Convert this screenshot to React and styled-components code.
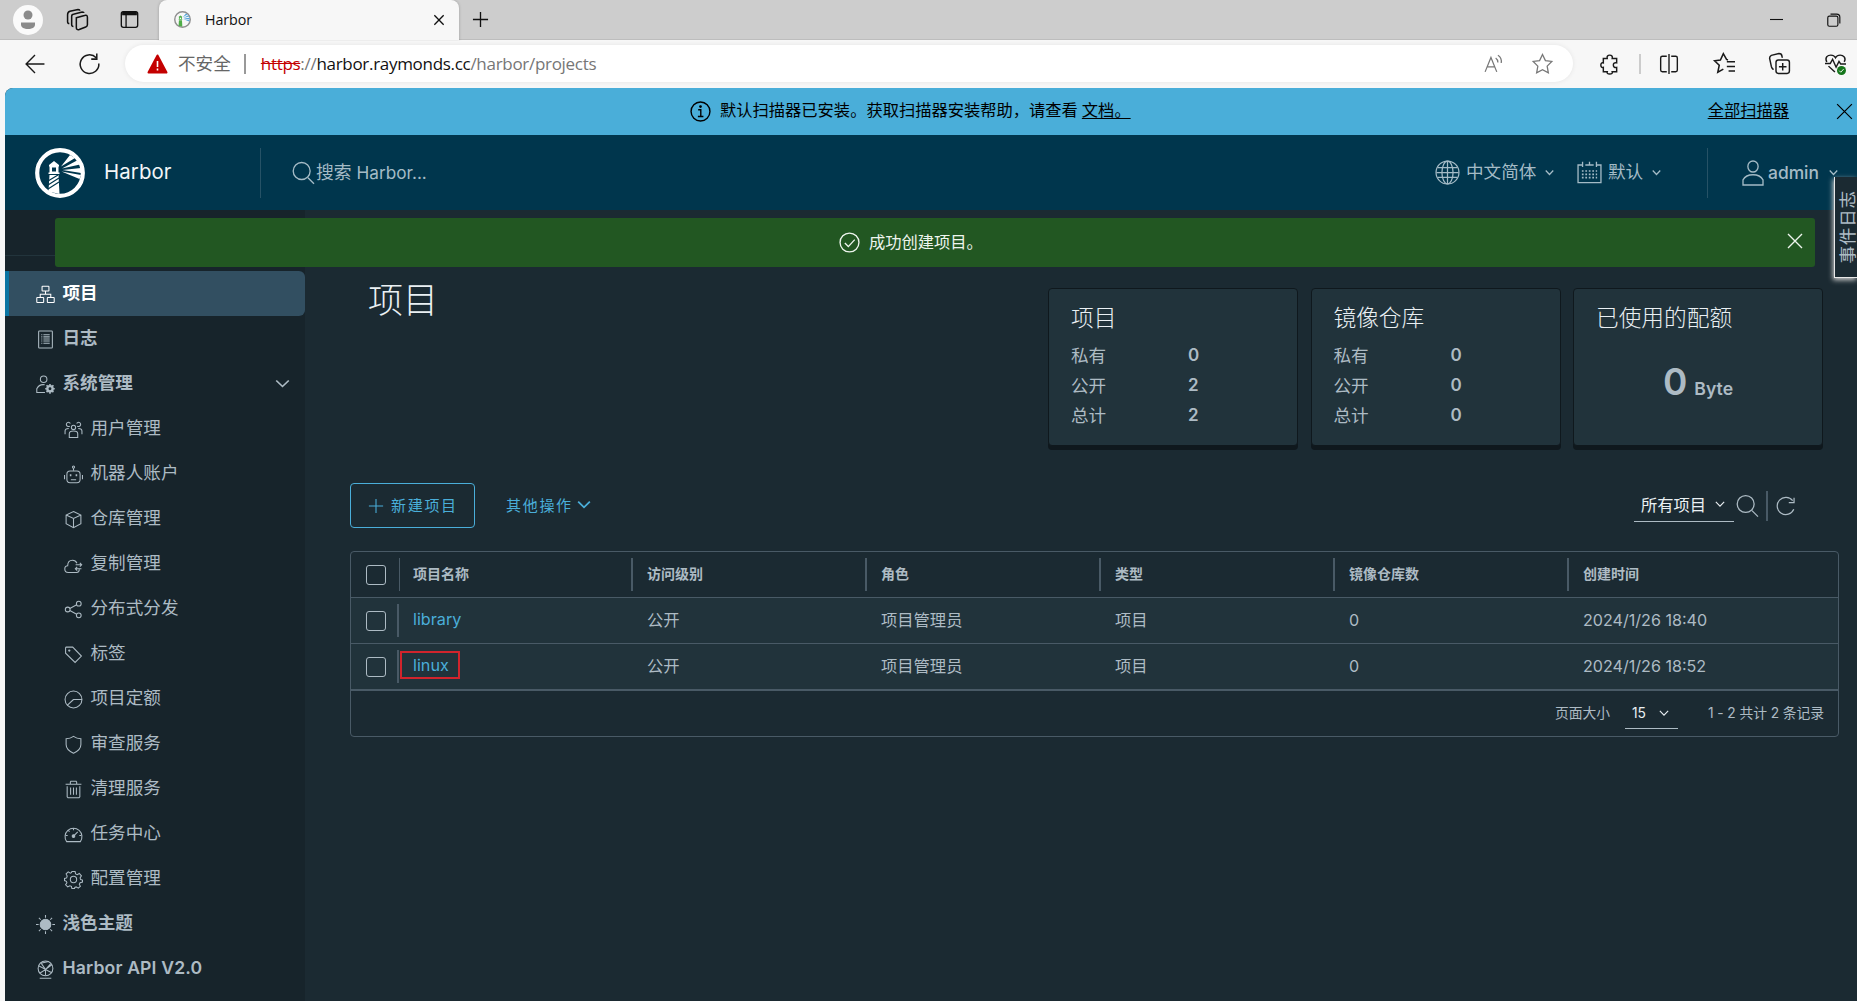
import React, { useState } from 'react'
import styled, { createGlobalStyle } from 'styled-components'

const navItems = [
  { icon: 'sitemap', label: '项目', active: true },
  { icon: 'logs', label: '日志' },
  { icon: 'admin', label: '系统管理', open: true },
  { icon: 'users', label: '用户管理', sub: true },
  { icon: 'robot', label: '机器人账户', sub: true },
  { icon: 'box', label: '仓库管理', sub: true },
  { icon: 'cloud', label: '复制管理', sub: true },
  { icon: 'share', label: '分布式分发', sub: true },
  { icon: 'tag', label: '标签', sub: true },
  { icon: 'pie', label: '项目定额', sub: true },
  { icon: 'shield', label: '审查服务', sub: true },
  { icon: 'trash', label: '清理服务', sub: true },
  { icon: 'gauge', label: '任务中心', sub: true },
  { icon: 'cog', label: '配置管理', sub: true },
  { icon: 'sun', label: '浅色主题' },
  { icon: 'api', label: 'Harbor API V2.0', latin: true },
]

const summary = [
  { title: '项目', rows: [['私有', 0], ['公开', 2], ['总计', 2]] },
  { title: '镜像仓库', rows: [['私有', 0], ['公开', 0], ['总计', 0]] },
]

const columns = ['项目名称', '访问级别', '角色', '类型', '镜像仓库数', '创建时间']

const projects = [
  { name: 'library', access: '公开', role: '项目管理员', type: '项目', repos: 0, created: '2024/1/26 18:40' },
  { name: 'linux', access: '公开', role: '项目管理员', type: '项目', repos: 0, created: '2024/1/26 18:52', marked: true },
]

// all paths are drawn on a 36 x 36 grid
const paths = {
  sitemap: <><rect x="11.5" y="2.5" width="13" height="9" rx="1" /><rect x="1.5" y="23.5" width="13" height="9.5" rx="1" /><rect x="21.5" y="23.5" width="13" height="9.5" rx="1" /><path d="M18 11.5v6M8 23v-5.500h20V23" /></>,
  logs: <><rect x="5" y="2" width="26" height="32" rx="1.500" /><path d="M10 9h2M14 9h12M10 13h2M14 13h12M10 17h2M14 17h12M10 21h2M14 21h12M10 25h2M14 25h12" /></>,
  admin: <><circle cx="14.500" cy="8" r="6.200" /><path d="M17 33H1.500v-7c3-6 9-8.500 15-7.500" /><circle cx="26.500" cy="26" r="5" strokeWidth="4.500" /><path d="M26.500 17v3M26.500 32v3.500M17.500 26h3M32.500 26h3M20 19.500l2.500 2.500M30.500 30l2.500 2.500M20 32.500l2.500-2.500M30.500 22l2.500-2.500" strokeWidth="3" /></>,
  users: <><circle cx="18" cy="14" r="4" /><path d="M10 33v-7c0-3 3-5 8-5s8 2 8 5v7zM11 11.500a4 4 0 1 1 1-5M25 11.500a4 4 0 1 0-1-5M2 27v-6c0-3 2-5 7-5M34 27v-6c0-3-2-5-7-5" /></>,
  robot: <><rect x="5.500" y="11.500" width="25" height="22" rx="6" /><circle cx="18" cy="4" r="2" /><path d="M18 6v5M1 19v8M35 19v8M13 28h10" /><path d="M11 19.500h3M22 19.500h3" strokeWidth="3.500" /></>,
  box: <path d="M18 3l14 6.500v16.500L18 33.500 4 26V9.500zM4 9.500l14 6.500 14-6.500M18 16v17" />,
  cloud: <><path d="M29 27c0 4-2 6-5 6H8C4 33 1.500 30 1.500 26.500S4 20.500 7 20.500C7 14 11 10 16 10c4 0 7 2 8.500 5.500" /><path d="M22 18.500h11M30 15l3.500 3.500L30 22M33 26H22M25 22.500L21.500 26l3.500 3.500" /></>,
  share: <><circle cx="28" cy="7" r="4.500" /><circle cx="7" cy="18" r="4.500" /><circle cx="28" cy="29" r="4.500" /><path d="M11 16l13-7M11 20l13 7" /></>,
  tag: <><path d="M3 5.500L4 4h12.500L33 21 21 33 3 15.500z" /><circle cx="10" cy="10.500" r="1.200" /></>,
  pie: <><circle cx="18" cy="18" r="16" /><path d="M6 29l12-11M18 18h16" /></>,
  shield: <path d="M18 2.500c4 3 9 4.500 14 4.500v11c0 8-6 13-14 16.500C10 31 4 26 4 18V7c5 0 10-1.500 14-4.500z" />,
  trash: <path d="M3 8h30M6 12v20l1.500 1.500h21L30 32V12M12.500 14v14M18 14v14M23.500 14v14M12 8V4l1-1.500h10L24 4v4" />,
  gauge: <><path d="M5 31.500A16 16 0 1 1 31 31.500z" /><path d="M18 21l8-8M18 6v4M3 20h4M29 20h4M8 10l2.500 2.500" /><circle cx="18" cy="21" r="2.500" fill="currentColor" /></>,
  cog: <><circle cx="18" cy="18" r="6" /><path d="M15 3h6l1 4.500 3 1.300L29 6.500l4 4.500-2.500 4 1 3 3.500 1v4l-4.500 1-1.500 3 2 4-4 3.500-4-2.500-2.500 1L20 35h-5l-1-4-3-1-4 2-4-4 2.500-4-1-2.500L1 20v-4l4-1 1-3.500L4 7.500l4-4 4 2.500 2-1z" /></>,
  sun: <><circle cx="18" cy="18" r="10" fill="currentColor" /><path d="M18 0v5M18 31v5M0 18h5M31 18h5M5.500 5.500l3.500 3.500M27 27l3.500 3.500M5.500 30.500L9 27M27 9l3.500-3.500" /></>,
  api: <><circle cx="18" cy="16" r="14" /><path d="M7 34.500h22M5 11l13 7L30 9M18 18v11M9 5l9 13 10-11M7 25l11-7 12 6M24 3L9 6" /></>,
  globe: <><circle cx="18" cy="18" r="16.500" /><ellipse cx="18" cy="18" rx="8" ry="16.500" /><path d="M18 1.500v33M2 18h32M4 11h28M4 25h28" /></>,
  calendar: <><path d="M8 6H1.500v26.500h33V6H28M12 6h12" /><path d="M8 1v8M18 1v5M28 1v8" /><path d="M7 15h22M7 20h22M7 25h22" strokeDasharray="2.500 2.500" strokeWidth="2.500" /></>,
  user: <><circle cx="18" cy="9" r="7.700" /><path d="M3 34.500v-7c3-5 9-7 15-7s12 2 15 7v7z" /></>,
  search: <><circle cx="14.500" cy="15" r="12.700" /><path d="M24 25l9 9" /></>,
  refresh: <path d="M30 8.500A15.500 15.500 0 1 0 32 24M32.500 3v9H23" />,
  reload: <path d="M29.500 8A16 16 0 1 0 34 18M30.500 1v9.500H21" />,
  info: <><circle cx="18" cy="18" r="16.200" /><path d="M14 15h4.500v11M13.500 26.500h9.500" /><circle cx="18" cy="9.500" r="1.200" fill="currentColor" /></>,
  check: <><circle cx="18" cy="18" r="16.200" /><path d="M10 19l6 6 11-12" /></>,
  close: <path d="M4 4l28 28M32 4L4 32" />,
  plus: <path d="M18 2v32M2 18h32" />,
  chevron: <path d="M3 10l15 16 15-16" />,
  back: <path d="M35 18H2M18 2L2 18l16 16" />,
  star: <path d="M18 2.500l5 10.500 11 1.500-8 8 2 11.500-10-5.500-10 5.500 2-11.500-8-8L13 13z" />,
  starList: <><path d="M24 12l-2.500-1L16 1l-5 11-10 1.500 8 7.500-2.500 12 9.500-5.500" /><path d="M22 15h14M22 23h14M25 31h11" /></>,
  aloud: <><path d="M2 34L12.500 8 23 34M6 25h13" /><path d="M21 9c3 2 4 5 4 8M25 4c5 3 7 8 6 14" /></>,
  puzzle: <path d="M6 8h7c-1-4 1-6 4.500-6S23 4 22 8h8v8c-4-1-6 1-6 4s2 5 6 4v8h-8c1 3-1 4-4.500 4S12 35 13 32H6v-8c-3 1-4.500-1-4.500-4S3 15 6 16z" />,
  split: <path d="M14 4H6a3 3 0 0 0-3 3v22a3 3 0 0 0 3 3h8M22 4h8a3 3 0 0 1 3 3v22a3 3 0 0 1-3 3h-8M18 0v36" />,
  collections: <><rect x="12" y="12" width="23" height="23" rx="4" /><path d="M23.500 17v13M17 23.500h13M8 28c-2 0-3-2-4-5L1 9c0-3 1-4 3-5L17 1c3 0 5 1 5 4l1 3" /></>,
  workspaces: <path d="M16 15l14-4c3-1 5 0 5 3v13c0 2-1 3-3 4l-11 4c-3 1-5 0-5-3zM11 30c-2 0-3-1-3-3V13c0-2 1-4 3-4l15-4c2 0 3 0 3 2M4 25c-2 0-3-1-3-3V10c0-3 1-5 4-6l14-3c2 0 3 0 3 2" />,
  tabs: <><rect x="2.500" y="3" width="31" height="30" rx="4" /><path d="M4 6.500h28" strokeWidth="7" /><path d="M11.500 8v25" /></>,
  heart: <path d="M17 34L6 23M3 15C-1 6 5 2 10 2c4 0 7 3 8 5 1-2 4-5 8-5 5 0 11 5 7 13M0 18h9l4-8 6 15 5-11 3 5h9" />,
  restore: <><rect x="2" y="8" width="26" height="26" rx="4" /><path d="M9 3h16c5 0 8 3 8 8v16" /></>,
  minimize: <path d="M0 18h36" />,
}

const Icon = ({ name, size = 20, height, weight = 2 }) => (
  <Svg width={size} height={height || size} viewBox="0 0 36 36" preserveAspectRatio="none" strokeWidth={weight}>
    {paths[name]}
  </Svg>
)

const HarborLogo = ({ size, ring = '#fff', tower = '#fff', beam = '#fff' }) => (
  <Logo width={size} height={size} viewBox="0 0 50 50">
    <circle cx="25" cy="25" r="22.800" fill="none" stroke={ring} strokeWidth="4.200" />
    <path d="M14 18.500v-1.500l5-4 5 4v1.500h-.5v6h1v1.500h-11v-1.500h1v-6z" fill={tower} />
    <path d="M17 19.500h4v4h-4z" fill={ring === '#fff' ? '#00364d' : '#f7f7f7'} />
    <path d="M14.500 27h9l1 19-11-2.500z" fill={tower} />
    {ring === '#fff' && <path d="M13 33l10-6M13 37l11-7M13 41l11-7" stroke="#00364d" strokeWidth="1.200" />}
    <path d="M26 18.500L35 7l5 3zM27 20.500L42 12.500l3 4zM27.500 22l18.500-2v5zM26.500 23.500l19.500 3.500-1.500 4z" fill={beam} />
  </Logo>
)

const App = () => {
  const [showAlert, setShowAlert] = useState(true)
  const [checked, setChecked] = useState({})

  const toggle = (name) => {
    setChecked((el) => ({ ...el, [name]: !el[name] }))
  }

  return (
    <Window>
      <GlobalStyle />
      <TabStrip>
        <Avatar><svg width="16" height="20" viewBox="0 0 16 20"><circle cx="8" cy="5" r="4.500" fill="#8b8b8b" /><path d="M1 12.500h14v2c0 3-3 4.500-7 4.500s-7-1.500-7-4.500z" fill="#8b8b8b" /></svg></Avatar>
        <StripIcon $left={24}><Icon name="workspaces" size={21} weight={2.600} /></StripIcon>
        <StripIcon $left={32}><Icon name="tabs" size={19} weight={2.500} /></StripIcon>
        <BrowserTab>
          <HarborLogo size={17} ring="#909090" tower="#4fae48" beam="#56a6dd" />
          <TabTitle>Harbor</TabTitle>
          <Icon name="close" size={12} weight={4} />
        </BrowserTab>
        <StripIcon $left={13}><Icon name="plus" size={17} weight={2.800} /></StripIcon>
        <WindowButtons>
          <Icon name="minimize" size={13} weight={3} />
          <Icon name="restore" size={14} weight={3} />
        </WindowButtons>
      </TabStrip>

      <Toolbar>
        <Icon name="back" size={20} weight={2.500} />
        <Reload><Icon name="reload" size={21} weight={2.600} /></Reload>
        <AddressBar>
          <svg width="21" height="20" viewBox="0 0 21 20"><path d="M10.500 1.500L19.500 18.500h-18z" fill="#c40000" stroke="#c40000" strokeWidth="2" strokeLinejoin="round" /><path d="M10.500 7v6M10.500 14.500v2" stroke="#fff" strokeWidth="1.600" /></svg>
          <Unsafe>不安全</Unsafe>
          <Url><s>https</s>://<b>harbor.raymonds.cc</b>/harbor/projects</Url>
          <AddressIcons>
            <Icon name="aloud" size={20} weight={2.200} />
            <Icon name="star" size={21} weight={2.200} />
          </AddressIcons>
        </AddressBar>
        <ToolIcons>
          <Icon name="puzzle" size={20} weight={2.600} />
          <ToolDivider />
          <Icon name="split" size={20} weight={2.500} />
          <Icon name="starList" size={21} weight={2.600} />
          <Icon name="collections" size={21} weight={2.500} />
          <Health>
            <Icon name="heart" size={21} height={19} weight={2.500} />
            <HealthBadge viewBox="0 0 10 10"><circle cx="5" cy="5" r="5" fill="#15761b" /><path d="M2.500 5.200l1.700 1.700 3.200-3.500" stroke="#fff" fill="none" /></HealthBadge>
          </Health>
        </ToolIcons>
      </Toolbar>

      <Page>
        <Banner>
          <Icon name="info" size={21} weight={2.400} />
          <span>默认扫描器已安装。获取扫描器安装帮助，请查看</span>
          <a>文档。</a>
          <BannerRight>
            <a>全部扫描器</a>
            <Icon name="close" size={19} weight={2.300} />
          </BannerRight>
        </Banner>

        <Header>
          <HarborLogo size={50} />
          <Brand>Harbor</Brand>
          <HeaderSearch>
            <Icon name="search" size={24} weight={2} />
            搜索<span>Harbor...</span>
          </HeaderSearch>
          <HeaderMenu $width={142}><Icon name="globe" size={25} weight={1.800} /><span>中文简体</span><Icon name="chevron" size={9} weight={5} /></HeaderMenu>
          <HeaderMenu $width={130}><Icon name="calendar" size={25} height={24} weight={1.900} /><span>默认</span><Icon name="chevron" size={9} weight={5} /></HeaderMenu>
          <UserMenu><Icon name="user" size={24} height={26} weight={2} /><span>admin</span><Icon name="chevron" size={9} weight={5} /></UserMenu>
        </Header>

        <Body>
          <Sidebar>
            <SidebarTop />
            {navItems.map((item) => (
              <NavItem key={item.label} $active={item.active} $sub={item.sub}>
                <Icon name={item.icon} size={19} />
                <NavLabel $latin={item.latin}>{item.label}</NavLabel>
                {item.open && <Icon name="chevron" size={15} height={13} weight={4} />}
              </NavItem>
            ))}
          </Sidebar>

          <Main>
            <Top>
              <Title>项目</Title>
              <Cards>
                {summary.map((card) => (
                  <Card key={card.title}>
                    <CardTitle>{card.title}</CardTitle>
                    {card.rows.map(([label, value]) => (
                      <CardRow key={label}><span>{label}</span><strong>{value}</strong></CardRow>
                    ))}
                  </Card>
                ))}
                <Card>
                  <CardTitle>已使用的配额</CardTitle>
                  <Quota><strong>0</strong>Byte</Quota>
                </Card>
              </Cards>
            </Top>

            <Actions>
              <NewButton><Icon name="plus" size={16} weight={2.400} /><span>新建项目</span></NewButton>
              <MoreButton><span>其他操作</span><Icon name="chevron" size={14} height={13} weight={4.500} /></MoreButton>
              <Filter>
                <FilterSelect>所有项目<Icon name="chevron" size={10} weight={4} /></FilterSelect>
                <Icon name="search" size={24} weight={1.900} />
                <FilterDivider />
                <Icon name="refresh" size={20} weight={2.200} />
              </Filter>
            </Actions>

            <Table>
              <HeadRow>
                <CheckCell><Checkbox onClick={() => toggle('all')} $on={checked.all} /></CheckCell>
                {columns.map((name) => <HeadCell key={name}>{name}</HeadCell>)}
              </HeadRow>
              {projects.map((p) => (
                <Row key={p.name}>
                  <CheckCell $row><Checkbox onClick={() => toggle(p.name)} $on={checked[p.name]} /></CheckCell>
                  <Cell><ProjectLink $marked={p.marked}>{p.name}</ProjectLink></Cell>
                  <Cell>{p.access}</Cell>
                  <Cell>{p.role}</Cell>
                  <Cell>{p.type}</Cell>
                  <Cell $latin>{p.repos}</Cell>
                  <Cell $latin>{p.created}</Cell>
                </Row>
              ))}
              <TableFooter>
                页面大小
                <PageSize>15<Icon name="chevron" size={10} weight={4} /></PageSize>
                1 - 2 共计 2 条记录
              </TableFooter>
            </Table>
          </Main>
        </Body>

        {showAlert && (
          <Alert>
            <Icon name="check" size={21} weight={2.300} />
            <span>成功创建项目。</span>
            <AlertClose onClick={() => setShowAlert(false)}><Icon name="close" size={18} weight={2.800} /></AlertClose>
          </Alert>
        )}
        <EventTab>事件日志</EventTab>
      </Page>
    </Window>
  )
}

export default App

const GlobalStyle = createGlobalStyle`
  * {
    box-sizing: border-box;
  }
  body {
    margin: 0;
    overflow: hidden;
  }
`

const Window = styled.div`
  display: flex;
  flex-direction: column;
  width: 1857px;
  height: 1001px;
  overflow: hidden;
  background: #f7f7f7;
  font-family: "Inter", "Noto Sans CJK SC", sans-serif;
`
const Svg = styled.svg`
  flex: none;
  fill: none;
  stroke: currentColor;
  overflow: visible;
`
const Logo = styled.svg`
  flex: none;
`

const TabStrip = styled.div`
  display: flex;
  align-items: center;
  height: 40px;
  padding-left: 13px;
  background: #cdcdcd;
  border-bottom: 1px solid #bdbdbd;
  color: #111;
`
const Avatar = styled.div`
  display: flex;
  align-items: center;
  justify-content: center;
  width: 30px;
  height: 30px;
  border-radius: 50%;
  background: #fafafa;
`
const StripIcon = styled.div`
  display: flex;
  margin-left: ${(p) => p.$left}px;
`
const BrowserTab = styled.div`
  display: flex;
  align-items: center;
  width: 300px;
  height: 41px;
  margin: 0 0 -1px 20px;
  padding: 0 14px 1px 15px;
  border-radius: 8px 8px 0 0;
  background: #f7f7f7;
  box-shadow: 0 0 3px rgba(0, 0, 0, 0.25);
  clip-path: inset(0 -4px 0 -4px);
`
const TabTitle = styled.div`
  flex: 1;
  margin-left: 14px;
  font: 14.300px "Open Sans", sans-serif;
  letter-spacing: -0.1px;
`
const WindowButtons = styled.div`
  display: flex;
  align-items: center;
  gap: 44px;
  margin-left: auto;
  padding-right: 16px;
`

const Toolbar = styled.div`
  display: flex;
  align-items: center;
  flex: none;
  height: 48px;
  padding: 0 0 1px 25px;
  color: #1a1a1a;
`
const Reload = styled.div`
  display: flex;
  margin: 0 25px 0 34px;
`
const AddressBar = styled.div`
  display: flex;
  align-items: center;
  width: 1448px;
  height: 37px;
  padding: 0 20px 0 22px;
  border-radius: 19px;
  background: #fff;
  box-shadow: 0 0 5px rgba(0, 0, 0, 0.08);
`
const Unsafe = styled.div`
  margin-left: 10px;
  padding-right: 13px;
  border-right: 2px solid #999;
  font-size: 17.600px;
  line-height: 20px;
  color: #666;
`
const Url = styled.div`
  margin-left: 15px;
  font: 17px "Open Sans", sans-serif;
  letter-spacing: -0.3px;
  color: #767676;

  s {
    color: #c40000;
  }
  b {
    font-weight: 400;
    color: #111;
  }
`
const AddressIcons = styled.div`
  display: flex;
  gap: 28px;
  margin-left: auto;
  color: #777;
`
const ToolIcons = styled.div`
  display: flex;
  flex: 1;
  align-items: center;
  justify-content: space-between;
  padding: 0 11px 0 27px;
`
const ToolDivider = styled.div`
  width: 2px;
  height: 20px;
  margin: 0 -16px;
  background: #ccc;
`
const Health = styled.div`
  position: relative;
  display: flex;
`
const HealthBadge = styled.svg`
  position: absolute;
  right: 0;
  bottom: -2px;
  width: 9px;
  height: 9px;
`

const Page = styled.div`
  position: relative;
  display: flex;
  flex-direction: column;
  flex: 1;
  min-height: 0;
  margin-left: 5px;
  overflow: hidden;
  border-radius: 8px 0 0 0;
  background: #1b2a32;
`
const Banner = styled.div`
  position: relative;
  display: flex;
  align-items: center;
  flex: none;
  height: 47px;
  padding-left: 685px;
  background: #4aaed9;
  color: #000;
  font-size: 16.270px;

  span {
    margin: -5px 4px 0 9px;
  }
  a {
    margin-top: -5px;
    text-decoration: underline;
    text-underline-offset: 2px;
  }
`
const BannerRight = styled.div`
  display: flex;
  align-items: center;
  gap: 46px;
  margin-left: auto;
  padding-right: 3px;
`
const Header = styled.div`
  display: flex;
  align-items: center;
  flex: none;
  height: 75px;
  padding-left: 30px;
  background: #00364d;
  color: #a4bbc6;
`
const Brand = styled.div`
  width: 156px;
  margin: -2px 0 0 18px;
  padding-left: 1px;
  font-size: 20.400px;
  letter-spacing: 0.1px;
  color: #f2f6f8;
`
const HeaderSearch = styled.div`
  display: flex;
  align-items: center;
  flex: 1;
  height: 50px;
  margin-left: 1px;
  padding: 0 0 0 31px;
  border-left: 1px solid #265266;
  font-size: 17.800px;
  line-height: 26px;

  span {
    margin-left: 5px;
    font-size: 17.200px;
  }
`
const HeaderMenu = styled.div`
  display: flex;
  align-items: center;
  width: ${(p) => p.$width}px;
  font-size: 17.600px;

  span {
    margin: -4px 9px 0 6px;
  }
`
const UserMenu = styled.div`
  display: flex;
  align-items: center;
  height: 50px;
  width: 150px;
  padding-left: 33px;
  border-left: 1px solid #265266;
  font-size: 17.400px;
  font-weight: 500;

  span {
    width: 52px;
    margin: -1px 9px 0 3px;
  }
`
const Body = styled.div`
  display: flex;
  flex: 1;
  min-height: 0;
`
const Sidebar = styled.div`
  width: 300px;
  background: #17242b;
  color: #adbbc4;
`
const SidebarTop = styled.div`
  height: 46px;
  margin-bottom: 15px;
  border-bottom: 1px solid #22343c;
`
const NavItem = styled.div`
  display: flex;
  align-items: center;
  height: 45px;
  padding: 0 15px 0 ${(p) => (p.$sub ? 58.500 : 30.500)}px;
  font-size: 17.600px;
  font-weight: ${(p) => (p.$sub ? 400 : 600)};
  ${(p) => p.$active && `
    color: #fff;
    background: #324f61;
    border-radius: 0 6px 6px 0;
    box-shadow: inset 4px 0 0 #0a75a3;
  `}

  > svg:first-child {
    margin-top: 1px;
  }
`
const NavLabel = styled.div`
  flex: 1;
  margin: ${(p) => (p.$latin ? -2 : -4)}px 0 0 8px;
  letter-spacing: ${(p) => (p.$latin ? 0.150 : 0)}px;
`

const Main = styled.div`
  flex: 1;
  padding: 78px 18px 0 45px;
`
const Top = styled.div`
  display: flex;
  justify-content: space-between;
  height: 195px;
  padding: 0 16px 0 18px;
`
const Title = styled.h2`
  margin: -8px 0 0;
  font-size: 35px;
  font-weight: 300;
  line-height: 40px;
  color: #eaf0f3;
`
const Cards = styled.div`
  display: flex;
  gap: 12.500px;
`
const Card = styled.div`
  width: 250px;
  height: 158px;
  padding: 15px 22px;
  border: 1px solid #0f181d;
  border-radius: 4px;
  background: #21333b;
  box-shadow: 0 4px 0 #0f181d;
  color: #adbbc4;
`
const CardTitle = styled.div`
  margin-bottom: 7px;
  font-size: 22.700px;
  font-weight: 300;
  line-height: 28px;
  color: #eaf0f3;
`
const CardRow = styled.div`
  display: flex;
  align-items: center;
  height: 30px;
  font-size: 17.600px;
  font-weight: 400;

  span {
    width: 117px;
  }
  strong {
    margin-top: 1px;
    font-size: 17px;
    font-weight: 600;
  }
`
const Quota = styled.div`
  display: flex;
  align-items: baseline;
  justify-content: center;
  gap: 7px;
  padding-top: 20px;
  font-size: 17.600px;
  font-weight: 600;

  strong {
    font-size: 37px;
    font-weight: 600;
  }
`

const Actions = styled.div`
  display: flex;
  align-items: center;
  height: 45px;
  margin-bottom: 23px;
  color: #4aaed9;
  font-size: 15px;
  letter-spacing: 1.700px;

  span {
    margin-top: -2px;
  }
`
const NewButton = styled.div`
  display: flex;
  align-items: center;
  gap: 7px;
  width: 125px;
  height: 45px;
  padding-left: 17px;
  border: 1px solid #4aaed9;
  border-radius: 4px;
`
const MoreButton = styled.div`
  display: flex;
  align-items: center;
  gap: 4px;
  margin-left: 31px;

  svg {
    margin-top: -2px;
  }
`
const Filter = styled.div`
  display: flex;
  align-items: center;
  margin: 1px 43px 0 auto;
  color: #adbbc4;
`
const FilterSelect = styled.div`
  display: flex;
  align-items: center;
  justify-content: space-between;
  width: 100px;
  height: 31px;
  margin-right: 2px;
  padding: 0 9px 3px 7px;
  border-bottom: 1px solid #adbbc4;
  font-size: 16.300px;
  letter-spacing: 0;
  color: #eaf0f3;
`
const FilterDivider = styled.div`
  width: 2px;
  height: 30px;
  margin: 0 8px 0 6px;
  background: #495a66;
`

const Table = styled.div`
  border: 1px solid #495a66;
  border-radius: 4px;
  overflow: hidden;
  color: #adbbc4;
`
const HeadRow = styled.div`
  display: grid;
  grid-template-columns: 48px repeat(6, 234px);
  align-items: center;
  height: 45px;
`
const Row = styled(HeadRow)`
  height: 46px;
  border-top: 1px solid #495a66;
  background: #21333b;
`
const CheckCell = styled.div`
  display: flex;
  align-items: center;
  height: 33px;
  padding-left: 15px;
  margin-right: ${(p) => (p.$row ? 0 : -1)}px;
  border-right: ${(p) => (p.$row ? 2 : 1)}px solid #495a66;
`
const Checkbox = styled.div`
  width: 20px;
  height: 20px;
  border: 1px solid #adbbc4;
  border-radius: 3px;
  background: ${(p) => (p.$on ? '#4aaed9' : 'transparent')};
`
const HeadCell = styled.div`
  display: flex;
  align-items: center;
  height: 33px;
  padding: 0 0 4px 14px;
  border-right: 2px solid #495a66;
  font-size: 14px;
  font-weight: 600;

  &:last-child {
    border-right: none;
  }
`
const Cell = styled.div`
  padding: 0 0 ${(p) => (p.$latin ? 1 : 3)}px 14px;
  font-size: ${(p) => (p.$latin ? 16.100 : 16.300)}px;
`
const ProjectLink = styled.span`
  color: #4aaed9;
  font-size: 16.200px;
  ${(p) => p.$marked && `
    margin-left: -13px;
    padding: 2px 9px 2px 11px;
    border: 2px solid #d1242c;
  `}
`
const TableFooter = styled.div`
  display: flex;
  align-items: center;
  justify-content: flex-end;
  height: 47px;
  padding: 0 14px 3px 0;
  border-top: 2px solid #495a66;
  font-size: 13.800px;
  letter-spacing: -0.080px;
`
const PageSize = styled.div`
  display: flex;
  align-items: center;
  justify-content: space-between;
  width: 53px;
  height: 32px;
  margin: 2px 30px 0 15px;
  padding: 0 9px 0 7px;
  border-bottom: 1px solid #adbbc4;
  color: #eaf0f3;
`

const Alert = styled.div`
  position: absolute;
  top: 130px;
  left: 50px;
  display: flex;
  align-items: center;
  width: 1760px;
  height: 49px;
  padding: 0 11px 1px 784px;
  border-radius: 3px;
  background: #225722;
  color: #eef5ee;
  font-size: 16.270px;

  span {
    margin: -3px 0 0 9px;
  }
`
const AlertClose = styled.div`
  display: flex;
  margin: -3px 0 0 auto;
`
const EventTab = styled.div`
  position: absolute;
  top: 89px;
  right: 0;
  width: 23px;
  height: 101px;
  padding: 13px 0 13px 4px;
  border-left: 1px solid #e8e8e8;
  border-bottom: 1px solid #e8e8e8;
  background: #1b2a32;
  box-shadow: -1px 2px 5px #d0d0d0;
  color: #adbbc4;
  font-size: 17.600px;
  letter-spacing: 0.800px;
  line-height: 18px;
  white-space: nowrap;
  writing-mode: sideways-lr;
`
